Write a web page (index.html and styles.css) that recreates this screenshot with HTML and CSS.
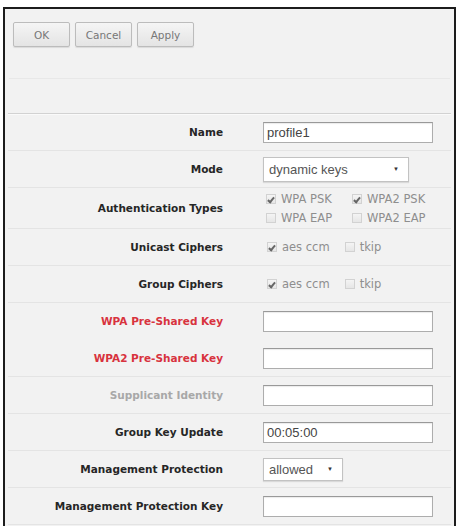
FILE: index.html
```html
<!DOCTYPE html>
<html lang="en">
<head>
    <meta charset="UTF-8">
    <meta name="viewport" content="width=device-width, initial-scale=1.0">
    <title>Security Profile</title>
    <link rel="stylesheet" href="styles.css">
</head>
<body>
    <div class="frame">
        <div class="toolbar">
            <button class="btn">OK</button>
            <button class="btn">Cancel</button>
            <button class="btn">Apply</button>
        </div>
        <div class="spacer"></div>

        <div class="form">
            <div class="row">
                <label class="lbl">Name</label>
                <div class="val"><input class="field" type="text" value="profile1"></div>
            </div>
            <div class="row">
                <label class="lbl">Mode</label>
                <div class="val">
                    <div class="select mode-select"><span>dynamic keys</span><span class="arrow">&#9660;</span></div>
                </div>
            </div>
            <div class="row row-tall">
                <label class="lbl">Authentication Types</label>
                <div class="val">
                    <div class="checks-grid">
                        <span class="check on"><i class="box"></i>WPA PSK</span>
                        <span class="check on"><i class="box"></i>WPA2 PSK</span>
                        <span class="check"><i class="box"></i>WPA EAP</span>
                        <span class="check"><i class="box"></i>WPA2 EAP</span>
                    </div>
                </div>
            </div>
            <div class="row">
                <label class="lbl">Unicast Ciphers</label>
                <div class="val checks">
                    <span class="check on"><i class="box"></i>aes ccm</span>
                    <span class="check"><i class="box"></i>tkip</span>
                </div>
            </div>
            <div class="row">
                <label class="lbl">Group Ciphers</label>
                <div class="val checks">
                    <span class="check on"><i class="box"></i>aes ccm</span>
                    <span class="check"><i class="box"></i>tkip</span>
                </div>
            </div>
            <div class="row no-line">
                <label class="lbl lbl-required">WPA Pre-Shared Key</label>
                <div class="val"><input class="field" type="text"></div>
            </div>
            <div class="row">
                <label class="lbl lbl-required">WPA2 Pre-Shared Key</label>
                <div class="val"><input class="field" type="text"></div>
            </div>
            <div class="row">
                <label class="lbl lbl-disabled">Supplicant Identity</label>
                <div class="val"><input class="field" type="text"></div>
            </div>
            <div class="row">
                <label class="lbl">Group Key Update</label>
                <div class="val"><input class="field" type="text" value="00:05:00"></div>
            </div>
            <div class="row">
                <label class="lbl">Management Protection</label>
                <div class="val">
                    <div class="select mp-select"><span>allowed</span><span class="arrow">&#9660;</span></div>
                </div>
            </div>
            <div class="row">
                <label class="lbl">Management Protection Key</label>
                <div class="val"><input class="field" type="text"></div>
            </div>
        </div>
    </div>
</body>
</html>
```

FILE: styles.css
```css
body {
    margin: 0;
    background: #fff;
    font-family: "DejaVu Sans", Verdana, sans-serif;
    overflow: hidden;
}
.frame {
    margin: 7px 3px 0;
    height: 530px;
    border: 2px solid #1c1c1c;
    border-bottom: none;
    background: #f2f2f2;
}
.toolbar {
    display: flex;
    gap: 5px;
    padding: 13px 8px 0;
    height: 56px;
}
.btn {
    width: 57px;
    height: 25px;
    padding: 0;
    border: 1px solid #bcbcbc;
    border-radius: 2px;
    background: linear-gradient(#f5f5f5, #e4e4e4);
    box-shadow: 0 1px 1px rgba(0,0,0,0.1);
    font-family: "DejaVu Sans", Verdana, sans-serif;
    font-size: 10.5px;
    color: #777;
}
.spacer {
    height: 34px;
    margin: 0 4px;
    border-top: 1px solid #e8e8e8;
}
.form {
    margin: 0 3px;
    border-top: 1px solid #d2d2d2;
    box-shadow: inset 0 1px 0 #fafafa;
}
.row {
    display: grid;
    grid-template-columns: 215px 1fr;
    column-gap: 40px;
    align-items: center;
    height: 37px;
    box-sizing: border-box;
    border-bottom: 1px solid #e4e4e4;
}
.row.no-line {
    border-bottom-color: transparent;
}
.row-tall {
    height: 41px;
}
.lbl {
    text-align: right;
    font-size: 10.5px;
    font-weight: bold;
    color: #262626;
    white-space: nowrap;
}
.lbl-required {
    color: #d8333e;
}
.lbl-disabled {
    color: #a8a8a8;
}
.field {
    display: block;
    width: 170px;
    height: 21px;
    box-sizing: border-box;
    margin: 0;
    padding: 0 3px;
    border: 1px solid #adadad;
    border-top-color: #999;
    background: #fff;
    box-shadow: inset 0 1px 1px rgba(0,0,0,0.08);
    font-family: "Liberation Sans", Arial, sans-serif;
    font-size: 13px;
    color: #444;
}
.select {
    display: flex;
    align-items: center;
    justify-content: space-between;
    height: 25px;
    box-sizing: border-box;
    padding: 0 9px 0 5px;
    border: 1px solid #c2c2c2;
    background: #fff;
    box-shadow: 0 1px 1px rgba(0,0,0,0.1);
    font-family: "Liberation Sans", Arial, sans-serif;
    font-size: 13px;
    color: #555;
}
.mode-select {
    width: 146px;
}
.mp-select {
    width: 80px;
    height: 23px;
}
.arrow {
    font-size: 6px;
    color: #333;
}
.checks {
    display: flex;
    gap: 15px;
    padding-left: 4px;
}
.checks-grid {
    display: grid;
    grid-template-columns: 86px auto;
    row-gap: 5px;
    padding-left: 3px;
}
.check {
    display: flex;
    align-items: center;
    gap: 5px;
    font-size: 11.5px;
    color: #8e8e8e;
    white-space: nowrap;
}
.box {
    position: relative;
    width: 10px;
    height: 10px;
    box-sizing: border-box;
    border: 1px solid #d2d2d2;
    background: linear-gradient(#f4f4f4, #e6e6e6);
}
.check.on .box::after {
    content: "";
    position: absolute;
    left: 2px;
    top: 1px;
    width: 2px;
    height: 5px;
    border: solid #666;
    border-width: 0 2px 2px 0;
    transform: rotate(40deg);
}
```
